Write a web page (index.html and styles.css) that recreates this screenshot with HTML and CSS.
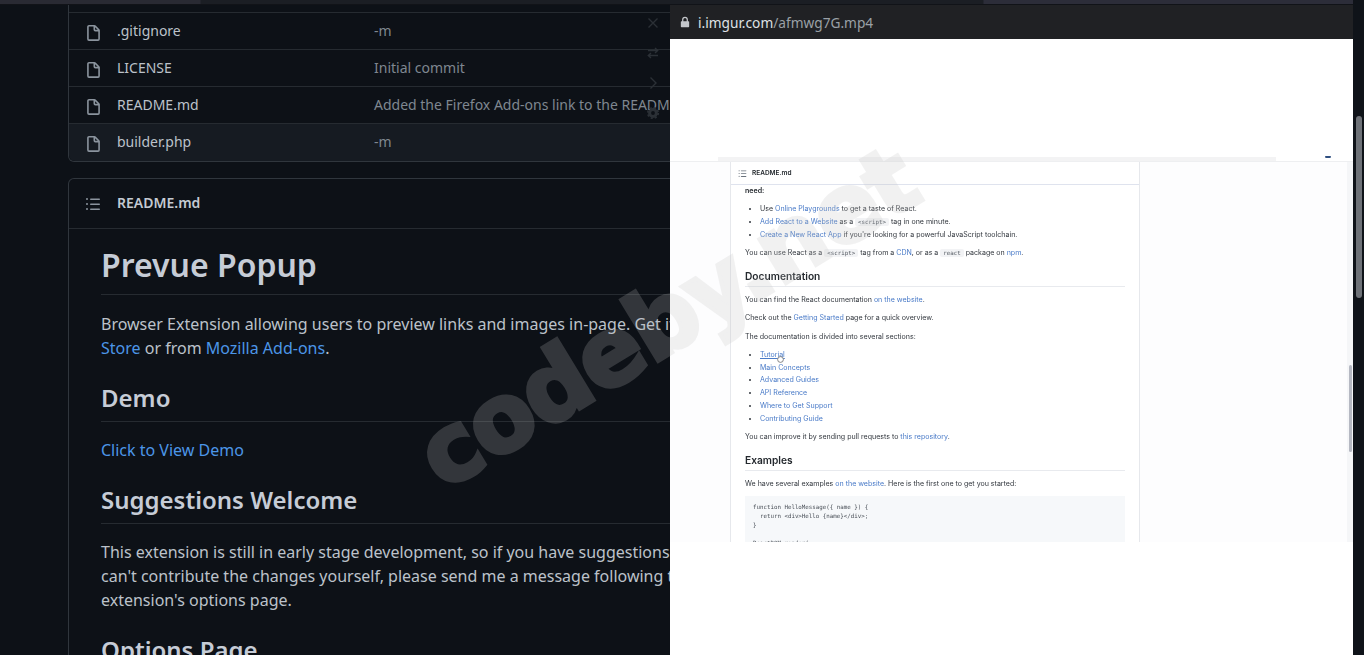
FILE: index.html
```html
<!DOCTYPE html>
<html lang="en">
<head>
<meta charset="utf-8">
<title>Prevue Popup</title>
<link rel="stylesheet" href="styles.css">
</head>
<body>
<div class="topbar"></div>
<main class="page">
  <section class="files">
    <div class="row"><svg class="ficon" viewBox="0 0 16 16"><path d="M3.75 1.5a.25.25 0 00-.25.25v11.5c0 .138.112.25.25.25h8.5a.25.25 0 00.25-.25V6H9.75A1.75 1.75 0 018 4.25V1.5H3.75zm5.75.56v2.19c0 .138.112.25.25.25h2.19L9.5 2.06zM2 1.75C2 .784 2.784 0 3.75 0h5.086c.464 0 .909.184 1.237.513l3.414 3.414c.329.328.513.773.513 1.237v8.086A1.75 1.75 0 0112.25 15h-8.5A1.75 1.75 0 012 13.25V1.75z"/></svg><span class="fname">.gitignore</span><span class="msg">-m</span></div>
    <div class="row"><svg class="ficon" viewBox="0 0 16 16"><path d="M3.75 1.5a.25.25 0 00-.25.25v11.5c0 .138.112.25.25.25h8.5a.25.25 0 00.25-.25V6H9.75A1.75 1.75 0 018 4.25V1.5H3.75zm5.75.56v2.19c0 .138.112.25.25.25h2.19L9.5 2.06zM2 1.75C2 .784 2.784 0 3.75 0h5.086c.464 0 .909.184 1.237.513l3.414 3.414c.329.328.513.773.513 1.237v8.086A1.75 1.75 0 0112.25 15h-8.5A1.75 1.75 0 012 13.25V1.75z"/></svg><span class="fname">LICENSE</span><span class="msg">Initial commit</span></div>
    <div class="row"><svg class="ficon" viewBox="0 0 16 16"><path d="M3.75 1.5a.25.25 0 00-.25.25v11.5c0 .138.112.25.25.25h8.5a.25.25 0 00.25-.25V6H9.75A1.75 1.75 0 018 4.25V1.5H3.75zm5.75.56v2.19c0 .138.112.25.25.25h2.19L9.5 2.06zM2 1.75C2 .784 2.784 0 3.75 0h5.086c.464 0 .909.184 1.237.513l3.414 3.414c.329.328.513.773.513 1.237v8.086A1.75 1.75 0 0112.25 15h-8.5A1.75 1.75 0 012 13.25V1.75z"/></svg><span class="fname">README.md</span><span class="msg">Added the Firefox Add-ons link to the README</span></div>
    <div class="row hover"><svg class="ficon" viewBox="0 0 16 16"><path d="M3.75 1.5a.25.25 0 00-.25.25v11.5c0 .138.112.25.25.25h8.5a.25.25 0 00.25-.25V6H9.75A1.75 1.75 0 018 4.25V1.5H3.75zm5.75.56v2.19c0 .138.112.25.25.25h2.19L9.5 2.06zM2 1.75C2 .784 2.784 0 3.75 0h5.086c.464 0 .909.184 1.237.513l3.414 3.414c.329.328.513.773.513 1.237v8.086A1.75 1.75 0 0112.25 15h-8.5A1.75 1.75 0 012 13.25V1.75z"/></svg><span class="fname">builder.php</span><span class="msg">-m</span></div>
  </section>
  <section class="readme">
    <header class="readme-head"><svg class="licon" viewBox="0 0 16 16"><path d="M2 4a1 1 0 100-2 1 1 0 000 2zm3.75-1.5a.75.75 0 000 1.5h8.5a.75.75 0 000-1.5h-8.5zm0 5a.75.75 0 000 1.5h8.5a.75.75 0 000-1.5h-8.5zm0 5a.75.75 0 000 1.5h8.5a.75.75 0 000-1.5h-8.5zM3 8a1 1 0 11-2 0 1 1 0 012 0zm-1 6a1 1 0 100-2 1 1 0 000 2z"/></svg><strong>README.md</strong></header>
    <article class="md">
      <h1>Prevue Popup</h1>
      <p class="intro">Browser Extension allowing users to preview links and images in-page. Get it on the Chrome Web<br><a href="#">Store</a> or from <a href="#">Mozilla Add-ons</a>.</p>
      <h2>Demo</h2>
      <p><a href="#">Click to View Demo</a></p>
      <h2>Suggestions Welcome</h2>
      <p>This extension is still in early stage development, so if you have suggestions or ideas but can't contribute the changes yourself, please send me a message following the link on the extension's options page.</p>
      <h2>Options Page</h2>
    </article>
  </section>
</main>

<div class="controls">
  <svg viewBox="0 0 16 16"><path d="M3.5 3.5l9 9M12.5 3.5l-9 9"/></svg>
  <svg viewBox="0 0 16 16"><path d="M3 5.5h9.5M10 3l2.7 2.5L10 8M13 10.5H3.5M6 8l-2.7 2.5L6 13"/></svg>
  <svg viewBox="0 0 16 16"><path d="M5.5 2.5L11 8l-5.5 5.5"/></svg>
  <svg class="gear" viewBox="0 0 16 16"><circle class="ring" cx="8" cy="8" r="3.4"/><circle class="teeth" cx="8" cy="8" r="5.2"/></svg>
</div>

<aside class="popup">
  <div class="addr">
    <svg class="lock" viewBox="0 0 12 14"><path d="M2.5 6V4.2a3.5 3.5 0 017 0V6h.7c.5 0 .8.4.8.8v5.6c0 .5-.4.8-.8.8H1.8c-.5 0-.8-.4-.8-.8V6.8c0-.5.4-.8.8-.8zm1.5 0h4V4.2a2 2 0 00-4 0z"/></svg>
    <span class="host">i.imgur.com</span><span class="pathname">/afmwg7G.mp4</span>
  </div>
  <div class="video">
    <div class="video-top"><div class="shade"></div><div class="dot"></div></div>
    <div class="video-body">
      <div class="shot">
        <div class="shot-head"><svg viewBox="0 0 16 16"><path d="M2 4a1 1 0 100-2 1 1 0 000 2zm3.75-1.5a.75.75 0 000 1.5h8.5a.75.75 0 000-1.5h-8.5zm0 5a.75.75 0 000 1.5h8.5a.75.75 0 000-1.5h-8.5zm0 5a.75.75 0 000 1.5h8.5a.75.75 0 000-1.5h-8.5zM3 8a1 1 0 11-2 0 1 1 0 012 0zm-1 6a1 1 0 100-2 1 1 0 000 2z"/></svg><b>README.md</b></div>
        <div class="shot-md">
          <p class="need"><b>need:</b></p>
          <ul>
            <li>Use <a href="#">Online Playgrounds</a> to get a taste of React.</li>
            <li><a href="#">Add React to a Website</a> as a <code>&lt;script&gt;</code> tag in one minute.</li>
            <li><a href="#">Create a New React App</a> if you're looking for a powerful JavaScript toolchain.</li>
          </ul>
          <p>You can use React as a <code>&lt;script&gt;</code> tag from a <a href="#">CDN</a>, or as a <code>react</code> package on <a href="#">npm</a>.</p>
          <h3>Documentation</h3>
          <p>You can find the React documentation <a href="#">on the website</a>.</p>
          <p>Check out the <a href="#">Getting Started</a> page for a quick overview.</p>
          <p>The documentation is divided into several sections:</p>
          <ul>
            <li><a class="under" href="#">Tutorial</a></li>
            <li><a href="#">Main Concepts</a></li>
            <li><a href="#">Advanced Guides</a></li>
            <li><a href="#">API Reference</a></li>
            <li><a href="#">Where to Get Support</a></li>
            <li><a href="#">Contributing Guide</a></li>
          </ul>
          <p>You can improve it by sending pull requests to <a href="#">this repository</a>.</p>
          <h3>Examples</h3>
          <p>We have several examples <a href="#">on the website</a>. Here is the first one to get you started:</p>
          <pre>function HelloMessage({ name }) {
  return &lt;div&gt;Hello {name}&lt;/div&gt;;
}

ReactDOM.render(</pre>
        </div>
        <svg class="cursor" viewBox="0 0 10 10"><circle cx="5" cy="5" r="3.2"/></svg>
      </div>
      <div class="shot-side"></div>
      <div class="shot-track"><div class="shot-thumb"></div></div>
    </div>
    <div class="video-rest"></div>
  </div>
</aside>

<div class="scrollbar"><div class="thumb"></div></div>
<div class="watermark">codeby.net</div>
</body>
</html>
```
FILE: styles.css
```css
* { box-sizing: border-box; }
html, body { margin: 0; height: 655px; overflow: hidden; }
body { background: #0d1117; color: #bcc2ca; font-family: "Noto Sans", sans-serif; position: relative; }
a { color: #4c96e8; text-decoration: none; }

.topbar { height: 5px; border-bottom: 1px solid #111318; background: linear-gradient(90deg, #292a33 0, #292a33 200px, #1b1e24 201px, #1b1e24 983px, #2c2d39 984px, #2c2d39 100%); }

.page { width: 756px; height: 650px; overflow: hidden; margin-left: 68px; }
.files { border: 1px solid #30363d; border-top: 0; border-radius: 0 0 6px 6px; padding-top: 7px; padding-bottom: 1px; }
.row { height: 37px; border-top: 1px solid #262b31; display: flex; align-items: center; padding-left: 16px; font-size: 14px; }
.row.hover { background: #161b22; margin-bottom: -1px; height: 38px; border-radius: 0 0 6px 6px; }
.ficon { width: 17px; height: 17px; fill: #8b949e; flex: none; margin-top: 4px; }
.licon { width: 16px; height: 16px; fill: #8b949e; flex: none; }
.fname { margin-left: 15px; margin-bottom: 2px; width: 257px; color: #bcc2ca; }
.msg { color: #7f8790; white-space: nowrap; margin-bottom: 2px; }

.readme { margin-top: 16px; border: 1px solid #30363d; border-bottom: 0; border-radius: 6px 6px 0 0; }
.readme-head { height: 50px; border-bottom: 1px solid #262b31; display: flex; align-items: center; padding-left: 16px; font-size: 14px; gap: 16px; }
.readme-head strong { font-weight: 600; color: #c4cad2; margin-bottom: 2px; }
.md { padding: 16px 32px 0; }
.md h1 { margin: 0 0 16.6px; font-size: 32px; line-height: 40px; font-weight: 600; padding-bottom: 9px; border-bottom: 1px solid #262b31; color: #c6ccd6; }
.md h2 { margin: 23px 0 16px; font-size: 24px; line-height: 30px; font-weight: 600; padding-bottom: 8px; border-bottom: 1px solid #262b31; color: #c6ccd6; }
.md p { margin: 0 0 16px; font-size: 16px; line-height: 24px; }
.md .intro { white-space: nowrap; }

.controls { position: absolute; left: 645px; top: 15px; width: 16px; display: flex; flex-direction: column; gap: 14px; }
.controls svg { width: 16px; height: 16px; fill: none; stroke: #2b3036; stroke-width: 1.4; }
.controls .gear .ring { stroke-width: 3; }
.controls .gear .teeth { stroke-width: 1.8; stroke-dasharray: 2.1 2; }

.popup { position: absolute; left: 670px; top: 5px; width: 683px; height: 650px; display: flex; flex-direction: column; background: #fff; }
.addr { height: 34px; flex: none; background: #202124; display: flex; align-items: center; padding-left: 10px; font-size: 13.7px; color: #dfe1e5; }
.lock { width: 10px; height: 12px; fill: #c4c7cb; margin-right: 8px; }
.pathname { color: #9aa0a6; }
.video { flex: 1; display: flex; flex-direction: column; min-height: 0; }
.video-top { height: 123px; flex: none; position: relative; border-bottom: 1px solid #eeeff1; display: flex; align-items: flex-end; padding-left: 48px; }
.shade { width: 558px; height: 4px; background: #f3f3f4; }
.dot { width: 6px; height: 2px; background: #2f4f80; border-radius: 2px 2px 4px 4px; margin-left: 49px; margin-bottom: 3px; }
.video-body { height: 380px; flex: none; display: flex; overflow: hidden; background: #fdfdfe; }
.shot { width: 410px; margin-left: 60px; flex: none; background: #fff; border: 1px solid #e6e8ec; border-width: 0 1px; font-family: Inter, sans-serif; font-size: 7.05px; color: #33383f; filter: blur(.45px); position: relative; }
.shot-head { height: 23px; border-bottom: 1px solid #dfe3ee; display: flex; align-items: center; padding-left: 7px; gap: 5px; font-size: 6.5px; color: #24292e; }
.shot-head svg { width: 9px; height: 9px; fill: #6a737d; }
.shot-head b { font-weight: 600; }
.shot-md { padding: 0 14px; }
.shot-md a { color: #4a7bc8; }
.shot-md a.under { text-decoration: underline; }
.shot-md p { margin: 0 0 5.5px; line-height: 12.8px; }
.shot-md .need { margin: 0 0 5.5px; }
.shot-md .need b { font-weight: 600; color: #24292e; }
.shot-md ul { margin: 0 0 5.5px; padding-left: 15px; }
.shot-md li { line-height: 12.8px; }
.shot-md code { font-family: "DejaVu Sans Mono", monospace; font-size: 5.8px; background: #f2f3f5; padding: 1px 3px; border-radius: 2px; color: #555b63; }
.shot-md h3 { margin: 10px 0 7px; font-size: 10.2px; line-height: 13px; font-weight: 600; color: #24292e; padding-bottom: 3px; border-bottom: 1px solid #e8eaee; }
.shot-md pre { margin: 0; background: #f6f8fa; padding: 7px 8px; font-family: "DejaVu Sans Mono", monospace; font-size: 5.8px; line-height: 9px; color: #4a5058; height: 60px; }
.cursor { position: absolute; left: 45px; top: 193px; width: 9px; height: 9px; fill: #fff; stroke: #777; stroke-width: 1; }
.shot-side { width: 207px; flex: none; }
.shot-track { width: 6px; flex: none; background: #f5f6f8; padding: 203px 1px 0 2px; }
.shot-thumb { height: 87px; background: #b5b8c2; border-radius: 2px; }
.video-rest { flex: 1; background: #fff; }

.scrollbar { position: absolute; left: 1353px; top: 0; width: 11px; height: 655px; background: #0f1319; padding: 116px 2px 0 3px; }
.thumb { height: 182px; background: #6e7278; border-radius: 3px; }

.watermark { position: absolute; left: 386px; top: 268px; font-family: "DejaVu Sans", sans-serif; font-weight: 700; font-size: 94px; line-height: 100px; letter-spacing: -2px; white-space: nowrap; color: #c1c1c1; opacity: .21; transform: rotate(-31.3deg); pointer-events: none; -webkit-text-stroke: 4px #c1c1c1; }
```
